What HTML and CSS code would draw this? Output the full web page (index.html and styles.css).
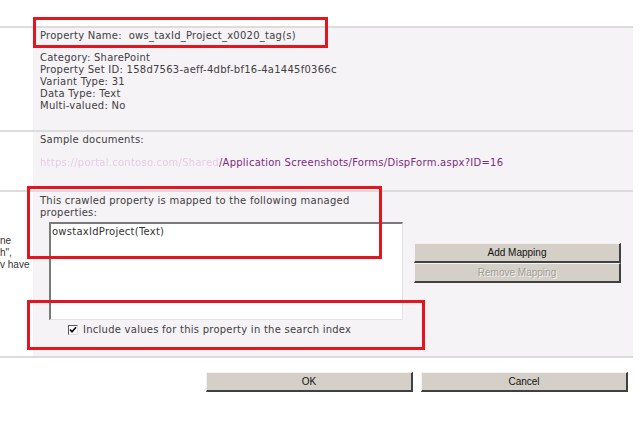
FILE: index.html
```html
<!DOCTYPE html>
<html lang="en">
<head>
    <meta charset="UTF-8">
    <meta name="viewport" content="width=device-width, initial-scale=1.0">
    <title>Edit Crawled Property</title>
    <link rel="stylesheet" href="styles.css">
</head>
<body>
    <div class="page">
        <div class="top-gap"></div>

        <div class="row">
            <div class="desc"></div>
            <div class="panel panel-name">
                <div class="line">Property Name:&nbsp; ows_taxId_Project_x0020_tag(s)</div>
                <div class="info">
                    <div class="line">Category: SharePoint</div>
                    <div class="line">Property Set ID: 158d7563-aeff-4dbf-bf16-4a1445f0366c</div>
                    <div class="line">Variant Type: 31</div>
                    <div class="line">Data Type: Text</div>
                    <div class="line">Multi-valued: No</div>
                </div>
            </div>
        </div>

        <div class="row">
            <div class="desc"></div>
            <div class="panel panel-samples">
                <div class="line">Sample documents:</div>
                <div class="line sample-link"><span class="hidden-host">https://portal.contoso.com/Shared</span>/Application Screenshots/Forms/DispForm.aspx?ID=16</div>
            </div>
        </div>

        <div class="row row-last">
            <div class="desc desc-text">
                <div class="desc-line">ne</div>
                <div class="desc-line">h",</div>
                <div class="desc-line">v have</div>
            </div>
            <div class="panel panel-mapping">
                <div class="mapping-main">
                    <div class="line">This crawled property is mapped to the following managed<br>properties:</div>
                    <div class="listbox">
                        <div class="list-item">owstaxIdProject(Text)</div>
                    </div>
                    <label class="include">
                        <span class="checkbox">
                            <svg width="10" height="10" viewBox="0 0 10 10">
                                <path d="M2 4.5 L4 6.8 L8 2.2" fill="none" stroke="#000" stroke-width="1.6"/>
                            </svg>
                        </span>
                        Include values for this property in the search index
                    </label>
                </div>
                <div class="map-buttons">
                    <button type="button" class="btn">Add Mapping</button>
                    <button type="button" class="btn" disabled>Remove Mapping</button>
                </div>
            </div>
        </div>

        <div class="actions">
            <button type="button" class="btn">OK</button>
            <button type="button" class="btn">Cancel</button>
        </div>

        <!-- callout frames -->
        <div class="callout callout-name"></div>
        <div class="callout callout-map"></div>
        <div class="callout callout-index"></div>
    </div>
</body>
</html>
```

FILE: styles.css
```css
body {
    margin: 0;
    background-color: white;
    font-family: "DejaVu Sans", Verdana, sans-serif;
    font-size: 10px;
    letter-spacing: 0.25px;
    color: #404040;
}
.page {
    position: relative;
    width: 633px;
}
.top-gap {
    height: 26px;
}
.row {
    display: flex;
    border-top: 2px solid #dcdcdc;
}
.row-last {
    border-bottom: 2px solid #dcdcdc;
}
.desc {
    width: 33px;
    flex-shrink: 0;
    background-color: white;
}
.panel {
    flex: 1;
    background-color: #f6f3f7;
    padding-left: 7px;
}
.line {
    line-height: 12px;
    white-space: nowrap;
}
.panel-name {
    padding-top: 2px;
    padding-bottom: 18px;
}
.info {
    margin-top: 10px;
}
.panel-samples {
    padding-top: 2px;
    padding-bottom: 21px;
}
.sample-link {
    margin-top: 11px;
    color: #7d2a7d;
}
.hidden-host {
    color: #d7a3d7;
    opacity: 0.5;
    filter: blur(0.7px);
}

/* left description column */
.desc-text {
    padding-top: 43px;
    font-family: "Liberation Sans", Arial, sans-serif;
    font-size: 10px;
    letter-spacing: 0;
    color: #333;
}
.desc-line {
    line-height: 12px;
    white-space: nowrap;
}

.panel-mapping {
    display: flex;
    align-items: flex-start;
    padding-top: 3px;
    padding-bottom: 20px;
}
.listbox {
    margin: 3px 0 0 9px;
    width: 351px;
    height: 95px;
    background-color: white;
    border-top: 2px solid #7a7a7a;
    border-left: 2px solid #7a7a7a;
    border-right: 1px solid #e2e2e2;
    border-bottom: 1px solid #e2e2e2;
}
.list-item {
    padding: 2px 0 0 1px;
    line-height: 12px;
    color: #333;
}
.include {
    display: flex;
    align-items: center;
    gap: 5px;
    margin: 4px 0 0 28px;
    line-height: 12px;
}
.checkbox {
    width: 8px;
    height: 8px;
    display: flex;
    align-items: center;
    justify-content: center;
    background-color: white;
    border-top: 1px solid #555;
    border-left: 1px solid #555;
    border-right: 1px solid #ddd;
    border-bottom: 1px solid #ddd;
}
.checkbox svg {
    flex-shrink: 0;
}
.map-buttons {
    display: flex;
    flex-direction: column;
    margin: 48px 0 0 11px;
}

.btn {
    width: 207px;
    height: 20px;
    padding: 0;
    background-color: #d4d0c8;
    border-top: 1px solid #f2f2f2;
    border-left: 1px solid #f2f2f2;
    border-right: 2px solid #404040;
    border-bottom: 2px solid #404040;
    font-family: "Liberation Sans", Tahoma, sans-serif;
    font-size: 10px;
    letter-spacing: 0;
    color: #111;
}
.btn:disabled {
    color: #a09c96;
    text-shadow: 1px 1px 0 #f4f4f4;
}
.actions {
    display: flex;
    justify-content: flex-end;
    gap: 8px;
    padding: 14px 5px 0 0;
}

.callout {
    position: absolute;
    border: 3px solid #e3161f;
    box-sizing: border-box;
}
.callout-name {
    left: 33px;
    top: 17px;
    width: 295px;
    height: 31px;
}
.callout-map {
    left: 27px;
    top: 186px;
    width: 355px;
    height: 73px;
}
.callout-index {
    left: 27px;
    top: 300px;
    width: 398px;
    height: 50px;
}
```
